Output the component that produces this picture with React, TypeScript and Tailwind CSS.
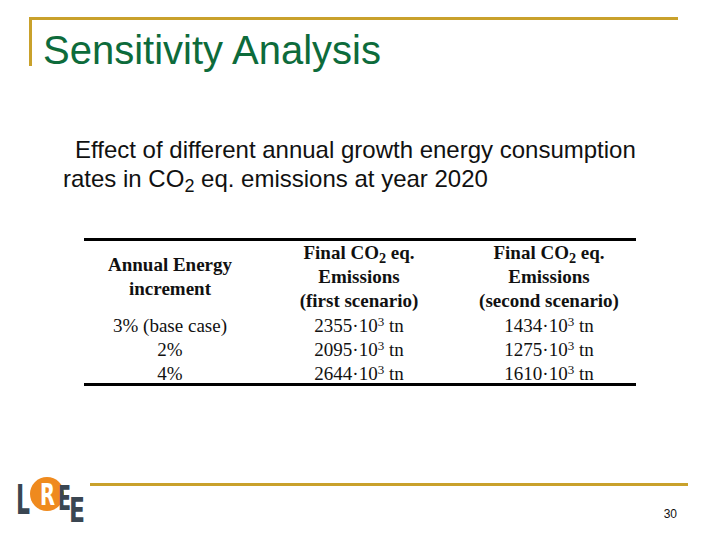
export default function App() {
  const rows = [
    { inc: "3% (base case)", first: "2355", second: "1434" },
    { inc: "2%", first: "2095", second: "1275" },
    { inc: "4%", first: "2644", second: "1610" },
  ]

  return (
    <div className="w-[720px] h-[540px] bg-white overflow-hidden font-['Liberation_Sans',Arial,sans-serif] text-black">
      {/* title frame */}
      <div className="pt-[17px] pl-[29px] pr-[42px]">
        <div className="h-[49px] border-t-[3px] border-l-[3px] border-[#c9a12b] pl-[11px] pt-[10px]">
          <h1 className="text-[40px] leading-[40px] text-[#0d6b3b] whitespace-nowrap">Sensitivity Analysis</h1>
        </div>
      </div>

      <p className="mt-[69px] ml-[63px] text-[24px] leading-[29px] text-[#111] whitespace-nowrap">
        <span className="pl-[12px]">Effect of different annual growth energy consumption</span>
        <br />
        rates in CO<sub>2</sub> eq. emissions at year 2020
      </p>

      {/* table */}
      <div className="mt-[45px] ml-[84px] w-[552px] border-y-[3px] border-black font-['Liberation_Serif','Times_New_Roman',serif] text-[19px] leading-[24px] text-center text-[#111]">
        <div className="grid grid-cols-[172px_206px_174px] font-bold">
          <div className="flex flex-col justify-center">
            <span>Annual Energy</span>
            <span>increment</span>
          </div>
          <div className="flex flex-col">
            <span>
              Final CO<sub>2</sub> eq.
            </span>
            <span>Emissions</span>
            <span>(first scenario)</span>
          </div>
          <div className="flex flex-col">
            <span>
              Final CO<sub>2</sub> eq.
            </span>
            <span>Emissions</span>
            <span>(second scenario)</span>
          </div>
        </div>
        <div className="pt-[1px] -mb-[3px]">
          {rows.map((r) => (
            <div key={r.inc} className="grid grid-cols-[172px_206px_174px]">
              <span>{r.inc}</span>
              <span>
                {r.first}·10<sup className="text-[13px]">3</sup> tn
              </span>
              <span>
                {r.second}·10<sup className="text-[13px]">3</sup> tn
              </span>
            </div>
          ))}
        </div>
      </div>

      {/* footer */}
      <div className="mt-[86px] flex">
        <svg width="86" height="54" viewBox="0 0 86 54" className="ml-[6px] shrink-0 overflow-visible">
          <circle cx="41" cy="22" r="17" fill="#ef8a1e" />
          <text
            x="10"
            y="42"
            fontSize="40"
            fontWeight="bold"
            fontFamily="DejaVu Sans Condensed, DejaVu Sans, sans-serif"
            fill="#3a4652"
            textLength="14"
            lengthAdjust="spacingAndGlyphs"
          >
            L
          </text>
          <text
            x="34"
            y="33"
            fontSize="30"
            fontWeight="bold"
            fontFamily="DejaVu Sans Condensed, DejaVu Sans, sans-serif"
            fill="#ffffff"
            textLength="15"
            lengthAdjust="spacingAndGlyphs"
          >
            R
          </text>
          <text
            x="52"
            y="38"
            fontSize="34"
            fontWeight="bold"
            fontFamily="DejaVu Sans Condensed, DejaVu Sans, sans-serif"
            fill="#3a4652"
            textLength="13"
            lengthAdjust="spacingAndGlyphs"
          >
            E
          </text>
          <text
            x="63"
            y="50"
            fontSize="34"
            fontWeight="bold"
            fontFamily="DejaVu Sans Condensed, DejaVu Sans, sans-serif"
            fill="#3a4652"
            textLength="16"
            lengthAdjust="spacingAndGlyphs"
          >
            E
          </text>
        </svg>
        <div className="flex-1 mr-[32px] -ml-[2px] flex flex-col">
          <div className="mt-[11px] h-[3px] bg-[#c9a12b]" />
          <div className="mt-[21px] mr-[11px] text-right text-[12px] leading-[14px] text-[#111]">30</div>
        </div>
      </div>
    </div>
  )
}
